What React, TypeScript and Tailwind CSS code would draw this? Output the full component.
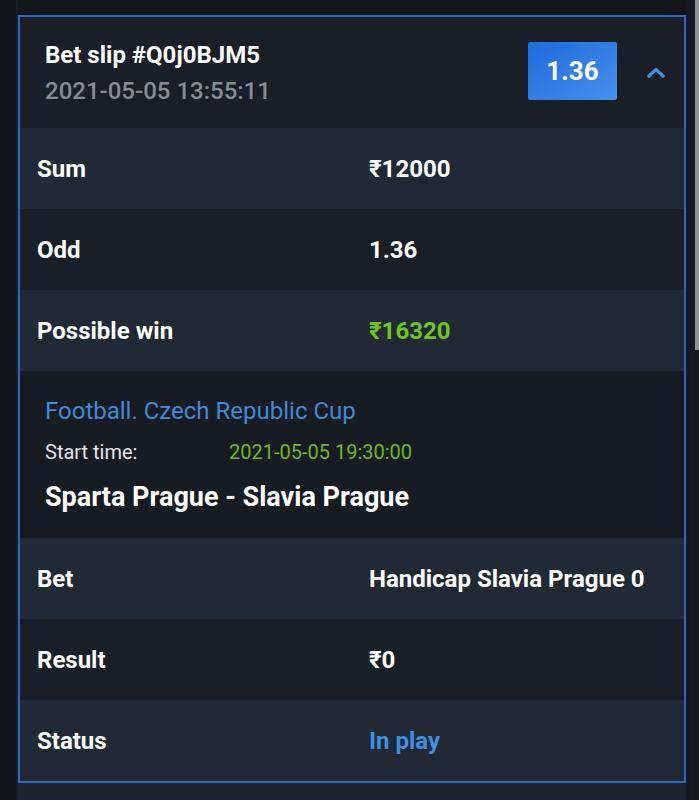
import React from "react"

const rowsTop = [
  { label: "Sum", value: "₹12000", tone: "text-white", bg: "bg-[#212934]" },
  { label: "Odd", value: "1.36", tone: "text-white", bg: "bg-[#191e27]" },
  { label: "Possible win", value: "₹16320", tone: "text-[#72c31f]", bg: "bg-[#212934]" },
]

const rowsBottom = [
  { label: "Bet", value: "Handicap Slavia Prague 0", tone: "text-white", bg: "bg-[#212934]" },
  { label: "Result", value: "₹0", tone: "text-white", bg: "bg-[#191e27]" },
  { label: "Status", value: "In play", tone: "text-[#3f8fe0]", bg: "bg-[#212934]" },
]

function Row({ label, value, tone, bg }: { label: string; value: string; tone: string; bg: string }) {
  return (
    <div className={`grid grid-cols-[332px_1fr] items-center h-[81px] pl-[17px] ${bg}`}>
      <span className="text-[24px] font-bold text-white">{label}</span>
      <span className={`text-[24px] font-bold ${tone}`}>{value}</span>
    </div>
  )
}

export default function App() {
  return (
    <div
      className="w-[699px] h-[800px] overflow-hidden bg-[#12151a] flex"
      style={{ fontFamily: "Roboto, 'Liberation Sans', sans-serif" }}
    >
      {/* left gutter */}
      <div className="w-[18px] shrink-0 flex">
        <div className="w-[16px] bg-[#111419]" />
        <div className="w-[2px] bg-[#191c22]" />
      </div>

      {/* main column */}
      <div className="w-[668px] shrink-0 pt-[15px] flex flex-col">
        <div className="border-2 border-[#2b69c8] flex flex-col">
          {/* header */}
          <div className="h-[111px] bg-[#1a1e27] flex items-center pl-[25px] pr-[19px]">
            <div className="flex-1 flex flex-col">
              <span className="text-[24px] font-bold text-white leading-[32px]">Bet slip #Q0j0BJM5</span>
              <span className="text-[24px] font-medium text-[#868b94] leading-[32px] mt-[4px]">2021-05-05 13:55:11</span>
            </div>
            <div className="w-[89px] h-[58px] rounded-[2px] bg-gradient-to-br from-[#1d6bdc] to-[#4890ea] flex items-center justify-center text-[26px] font-bold text-white mr-[30px] mt-[-3px]">
              1.36
            </div>
            <svg width="18" height="12" viewBox="0 0 18 12" fill="none" className="mt-[-1px]">
              <path d="M2 10 L9 3.5 L16 10" stroke="#3f8fe0" strokeWidth="3.2" strokeLinecap="square" />
            </svg>
          </div>

          {rowsTop.map((r) => (
            <Row key={r.label} {...r} />
          ))}

          {/* event */}
          <div className="h-[167px] bg-[#171b22] pl-[25px] pt-[25px] flex flex-col">
            <span className="text-[24px] text-[#3f8ad8] leading-[30px]">Football. Czech Republic Cup</span>
            <div className="flex items-center mt-[14px] leading-[24px]">
              <span className="w-[184px] text-[20px] text-[#e4e6ea]">Start time:</span>
              <span className="text-[20px] text-[#6fb81f]">2021-05-05 19:30:00</span>
            </div>
            <span className="text-[27px] font-bold text-white leading-[32px] mt-[17px]">Sparta Prague - Slavia Prague</span>
          </div>

          {rowsBottom.map((r) => (
            <Row key={r.label} {...r} />
          ))}
        </div>
        <div className="flex-1 bg-[#1f2530]" />
      </div>

      {/* right gutter with scrollbar */}
      <div className="flex-1 flex bg-[#14171c]">
        <div className="w-[9px] bg-[#161a20]" />
        <div className="flex-1 flex flex-col">
          <div className="h-[350px] bg-[#8e9094]" />
        </div>
      </div>
    </div>
  )
}
